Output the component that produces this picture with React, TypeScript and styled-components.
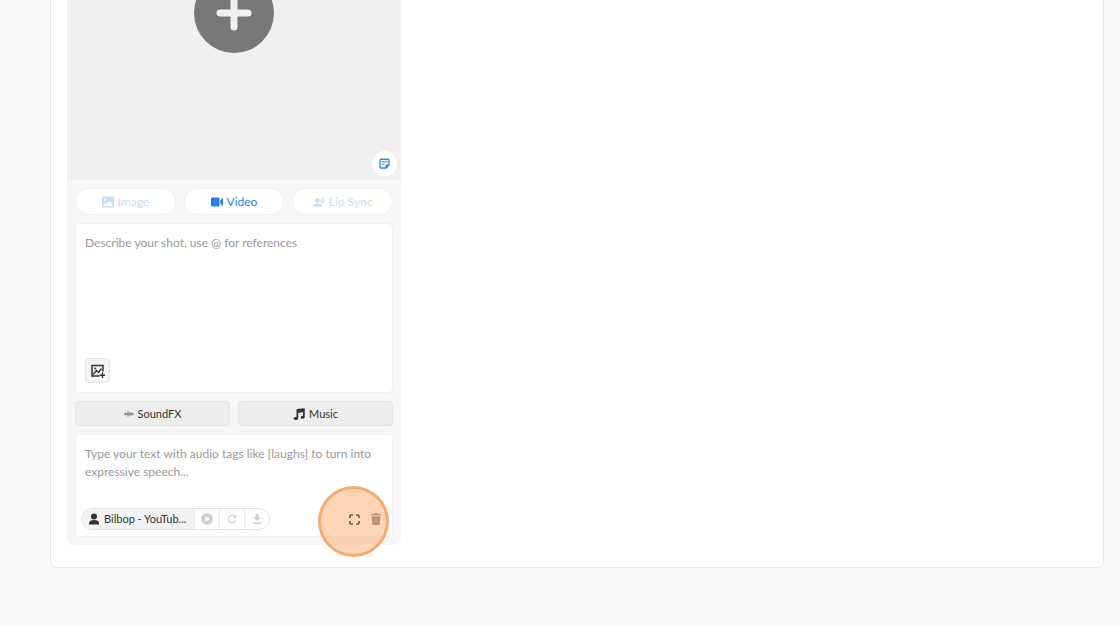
import React from "react";
import styled, { createGlobalStyle, css } from "styled-components";

const GlobalStyle = createGlobalStyle`
  *, *::before, *::after { box-sizing: border-box; }
  body {
    margin: 0;
    background: #f9fafc;
    font-family: Lato, "Open Sans", sans-serif;
    color: #333;
  }
  button, textarea { font: inherit; color: inherit; }
  button { padding: 0; border: 0; background: none; cursor: pointer; }
  svg { display: block; flex: none; }
`;

const Page = styled.div`
  min-height: 100vh;
  padding: 0 16px 58px 50px;
  overflow: hidden;
`;

/* The board is scrolled so that the upper part of the shot preview is out of view. */
const Board = styled.main`
  margin-top: -171px;
  padding: 16px 16px 22px;
  background: #fff;
  border: 1px solid #e6e8eb;
  border-radius: 6px;
`;

const ShotCard = styled.section`
  width: 334px;
  max-width: 100%;
  background: #f6f6f6;
  border-radius: 8px;
`;

const Preview = styled.div`
  position: relative;
  display: grid;
  place-items: center;
  aspect-ratio: 1;
  background: #f0f0f0;
`;

const AddButton = styled.button`
  display: grid;
  place-items: center;
  width: 80px;
  height: 80px;
  border-radius: 50%;
  background: #787878;
  color: #f0f0f0;
`;

const NoteButton = styled.button`
  position: absolute;
  right: 4px;
  bottom: 4px;
  display: grid;
  place-items: center;
  width: 25px;
  height: 25px;
  border-radius: 50%;
  background: #fff;
  color: #3586dc;
`;

const Controls = styled.div`
  display: flex;
  flex-direction: column;
  gap: 8px;
  padding: 8px;
`;

const ButtonRow = styled.div`
  display: flex;
  gap: 8px;
`;

const labelled = css`
  flex: 1;
  display: flex;
  align-items: center;
  justify-content: center;
  gap: 4px;
  line-height: 16px;
`;

const ModeButton = styled.button<{ $active?: boolean }>`
  ${labelled}
  height: 27px;
  border: 1px solid #f0f0f0;
  border-radius: 14px;
  background: #fff;
  font-size: 12px;
  color: ${(p) => (p.$active ? "#2680eb" : "#c3dcf8")};
`;

const AudioButton = styled.button`
  ${labelled}
  height: 25px;
  border: 1px solid #e3e3e3;
  border-radius: 4px;
  background: #ededed;
  font-size: 11px;
  color: #333;
`;

const Field = styled.div<{ $tall?: boolean }>`
  display: flex;
  flex-direction: column;
  height: ${(p) => (p.$tall ? 170 : 103)}px;
  padding: ${(p) => (p.$tall ? "10px 9px 9px" : "10px 5px 6px")};
  background: #fff;
  border: 1px solid #efefef;
  border-radius: 4px;
`;

const Prompt = styled.textarea<{ $inset?: boolean }>`
  flex: 1;
  min-height: 0;
  margin: 0;
  padding: 0 ${(p) => (p.$inset ? 4 : 0)}px;
  border: 0;
  outline: 0;
  resize: none;
  overflow: hidden;
  background: transparent;
  font-size: 12px;
  line-height: 18px;
  &::placeholder { color: #999; opacity: 1; }
`;

const AttachButton = styled.button`
  display: grid;
  place-items: center;
  width: 25px;
  height: 25px;
  border: 1px solid #e5e5e5;
  border-radius: 4px;
  background: #f4f4f4;
  color: #333;
`;

const FieldFooter = styled.div`
  display: flex;
  align-items: center;
  justify-content: space-between;
`;

const VoiceBar = styled.div`
  display: flex;
  height: 22px;
  border: 1px solid #e2e2e2;
  border-radius: 11px;
  overflow: hidden;
`;

const VoiceButton = styled.button`
  display: flex;
  align-items: center;
  gap: 4px;
  width: 112px;
  padding: 0 6px;
  background: #f2f2f2;
  font-size: 11px;
  line-height: 16px;
  color: #333;
`;

const VoiceName = styled.span`
  white-space: nowrap;
`;

const VoiceAction = styled.button`
  display: grid;
  place-items: center;
  width: 25px;
  border-left: 1px solid #ededed;
  color: #d0d0d0;
`;

const Tools = styled.div`
  position: relative;
  display: flex;
  gap: 8px;
  padding-right: 4px;
`;

const ToolButton = styled.button<{ $muted?: boolean }>`
  display: grid;
  place-items: center;
  width: 14px;
  height: 14px;
  color: ${(p) => (p.$muted ? "#888" : "#222")};
`;

const ClickHighlight = styled.div`
  position: absolute;
  right: -2px;
  top: -26px;
  width: 71px;
  height: 71px;
  border: 3px solid rgba(242, 148, 72, 0.65);
  border-radius: 50%;
  background: rgba(252, 161, 94, 0.45);
  pointer-events: none;
`;

interface IconProps {
  size?: number;
  box?: number;
  children: React.ReactNode;
}

const Icon = ({ size = 14, box = 24, children }: IconProps) => (
  <svg width={size} height={size} viewBox={`0 0 ${box} ${box}`} fill="currentColor" aria-hidden="true">
    {children}
  </svg>
);

const PlusIcon = () => (
  <Icon size={36} box={36}>
    <path d="M18 4v28M4 18h28" stroke="currentColor" strokeWidth="7" strokeLinecap="round" />
  </Icon>
);

const NoteIcon = () => (
  <Icon size={11} box={22}>
    <path d="M4 2.500h14q2 0 2 2V14l-6 6H4q-2 0-2-2V4.500q0-2 2-2z" fill="none" stroke="currentColor" strokeWidth="2.600" />
    <path d="M13 20v-5q0-2 2-2h5v2l-5 5z" />
    <path d="M5 7.500h12M5 12h6" stroke="currentColor" strokeWidth="2" />
  </Icon>
);

const ImageIcon = () => (
  <Icon size={12}>
    <path fillRule="evenodd" d="M3 1h18q3 0 3 3v16q0 3-3 3H3q-3 0-3-3V4q0-3 3-3zm3 4a2.500 2.500 0 1 0 0 5 2.500 2.500 0 0 0 0-5zM3 20h18v-4l-6-7-6 7-3-3-3 4z" />
  </Icon>
);

const VideoIcon = () => (
  <Icon size={12}>
    <path d="M2 3h13q2 0 2 2v14q0 2-2 2H2q-2 0-2-2V5q0-2 2-2zM18.500 9.500L22 5q2-2 2 1v12q0 3-2 1l-3.500-4.500z" />
  </Icon>
);

const LipSyncIcon = () => (
  <Icon size={12}>
    <circle cx="9" cy="9" r="4.500" />
    <path d="M0 21v-2q0-4 9-4t9 4v2zM16.700 5.400l-1.700 1.700a4 4 0 0 1 0 4.600l1.700 1.700c2-2 2-5.500 0-8zM20 2l-1.600 1.600c2.800 3 2.800 7.600 0 11L20 16.200c4-4 4-10.200 0-14.200z" />
  </Icon>
);

const AddImageIcon = () => (
  <Icon size={14} box={28}>
    <path d="M17 24H2V3h22v12" fill="none" stroke="currentColor" strokeWidth="3" />
    <path d="M4 21l7-8 4 4 6-8M23 17v11M17.500 22.500h10.500" fill="none" stroke="currentColor" strokeWidth="2.600" />
    <circle cx="8.500" cy="9" r="2" />
  </Icon>
);

const WaveIcon = () => (
  <Icon size={10} box={20}>
    <path d="M0 10h20M3.500 7v6M8 4.500v11M12 6v8M16 7v6" fill="none" stroke="#777" strokeWidth="2" />
  </Icon>
);

const MusicIcon = () => (
  <Icon size={12}>
    <path d="M7 4q0-1.500 1.500-2L22 .5q1.500 0 1.500 1.500v15.500c0 2.500-2 4-4.500 4s-3.500-1-3.500-2.700 2-3.500 4.500-3.300V8L10.500 10v10.500C10.500 22.800 8 24 5.300 24S1 23 1 21.200 3 18 7 18z" />
  </Icon>
);

const PersonIcon = () => (
  <Icon size={12}>
    <circle cx="12" cy="7" r="6" />
    <path d="M2 22v-2c0-4 4-6 10-6s10 2 10 6v2q0 1-1 1H3q-1 0-1-1z" />
  </Icon>
);

const PlayIcon = () => (
  <Icon size={12}>
    <path fillRule="evenodd" d="M12 0a12 12 0 1 0 0 24 12 12 0 0 0 0-24zM9 6.500l9 5.500-9 5.500z" />
  </Icon>
);

const RefreshIcon = () => (
  <Icon size={10}>
    <path d="M20.500 15.500A9 9 0 1 1 19.500 7" fill="none" stroke="currentColor" strokeWidth="2.600" />
    <path d="M22.500 1v9h-9z" />
  </Icon>
);

const DownloadIcon = () => (
  <Icon size={10}>
    <path d="M8.500 0h7v8H21l-9 9-9-9h5.500zM2 20.500h20V24H2z" />
  </Icon>
);

const ExpandIcon = () => (
  <Icon size={11} box={22}>
    <path d="M2 8V4q0-2 2-2h4M14 2h4q2 0 2 2v4M20 14v4q0 2-2 2h-4M8 20H4q-2 0-2-2v-4" fill="none" stroke="currentColor" strokeWidth="3.400" />
  </Icon>
);

const TrashIcon = () => (
  <Icon size={12}>
    <path d="M2 2h6l1-2h6l1 2h6v3H2zM3 6.500h18l-1.500 15.500q0 2-2 2h-11q-2 0-2-2z" />
  </Icon>
);

export default function App() {
  return (
    <Page>
      <GlobalStyle />
      <Board>
        <ShotCard>
          <Preview>
            <AddButton aria-label="Add shot"><PlusIcon /></AddButton>
            <NoteButton aria-label="Notes"><NoteIcon /></NoteButton>
          </Preview>
          <Controls>
            <ButtonRow>
              <ModeButton><ImageIcon />Image</ModeButton>
              <ModeButton $active><VideoIcon />Video</ModeButton>
              <ModeButton><LipSyncIcon />Lip Sync</ModeButton>
            </ButtonRow>
            <Field $tall>
              <Prompt aria-label="Shot description" placeholder="Describe your shot, use @ for references" />
              <AttachButton aria-label="Add image"><AddImageIcon /></AttachButton>
            </Field>
            <ButtonRow>
              <AudioButton><WaveIcon />SoundFX</AudioButton>
              <AudioButton><MusicIcon />Music</AudioButton>
            </ButtonRow>
            <Field>
              <Prompt
                $inset
                aria-label="Speech text"
                placeholder="Type your text with audio tags like [laughs] to turn into expressive speech..."
              />
              <FieldFooter>
                <VoiceBar>
                  <VoiceButton><PersonIcon /><VoiceName>Bilbop - YouTub...</VoiceName></VoiceButton>
                  <VoiceAction aria-label="Play"><PlayIcon /></VoiceAction>
                  <VoiceAction aria-label="Regenerate"><RefreshIcon /></VoiceAction>
                  <VoiceAction aria-label="Download"><DownloadIcon /></VoiceAction>
                </VoiceBar>
                <Tools>
                  <ToolButton aria-label="Expand"><ExpandIcon /></ToolButton>
                  <ToolButton $muted aria-label="Delete"><TrashIcon /></ToolButton>
                  <ClickHighlight />
                </Tools>
              </FieldFooter>
            </Field>
          </Controls>
        </ShotCard>
      </Board>
    </Page>
  );
}
